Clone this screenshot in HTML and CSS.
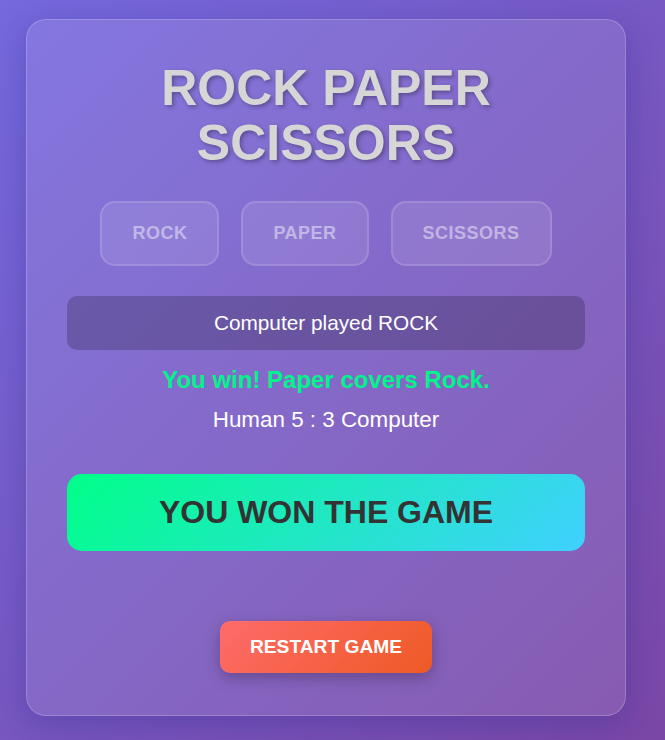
FILE: index.html
```html
<!DOCTYPE html>
<html lang="en">
<head>
<meta charset="utf-8">
<title>Rock Paper Scissors</title>
<link rel="stylesheet" href="styles.css">
</head>
<body>
<div class="page">
  <main class="card">
    <h1 class="title">ROCK PAPER SCISSORS</h1>
    <div class="choices">
      <button class="choice" disabled>ROCK</button>
      <button class="choice" disabled>PAPER</button>
      <button class="choice" disabled>SCISSORS</button>
    </div>
    <div class="computer">Computer played ROCK</div>
    <p class="result">You win! Paper covers Rock.</p>
    <p class="score">Human 5 : 3 Computer</p>
    <div class="banner">YOU WON THE GAME</div>
    <div class="restart-row">
      <button class="restart">RESTART GAME</button>
    </div>
  </main>
</div>
</body>
</html>
```

FILE: styles.css
```css
* { box-sizing: border-box; }
html, body { margin: 0; padding: 0; }
body {
  font-family: "Liberation Sans", Arial, sans-serif;
  background: linear-gradient(135deg, #7569de 0%, #7a47a6 100%);
  min-height: 740px;
  color: #fff;
}
.page {
  display: flex;
  justify-content: center;
  padding: 19px 39px 0 26px;
}
.card {
  width: 600px;
  height: 697px;
  padding: 40px;
  background: rgba(255, 255, 255, 0.1);
  border: 1px solid rgba(255, 255, 255, 0.2);
  border-radius: 20px;
  box-shadow: 0 8px 32px rgba(31, 38, 135, 0.3);
  display: flex;
  flex-direction: column;
  align-items: stretch;
}
.title {
  margin: 1px 0 0;
  text-align: center;
  font-size: 50px;
  line-height: 55px;
  font-weight: 700;
  color: #d6d6d6;
  text-shadow: 2px 2px 4px rgba(0, 0, 0, 0.3);
}
.choices {
  display: flex;
  justify-content: center;
  gap: 22px;
  margin-top: 30px;
}
.choice {
  font-family: inherit;
  font-size: 18px;
  font-weight: 700;
  letter-spacing: 0.5px;
  padding: 20px 30px;
  border: 2px solid rgba(255, 255, 255, 0.3);
  border-radius: 15px;
  background: rgba(255, 255, 255, 0.2);
  color: #fff;
  opacity: 0.5;
}
.computer {
  margin-top: 30px;
  padding: 15px;
  background: rgba(0, 0, 0, 0.2);
  border-radius: 10px;
  text-align: center;
  font-size: 20.8px;
}
.result {
  margin: 16px 0 0;
  text-align: center;
  font-size: 24px;
  font-weight: 700;
  color: #00f58a;
}
.score {
  margin: 13px 0 0;
  text-align: center;
  font-size: 22.4px;
}
.banner {
  margin-top: 41px;
  padding: 20px;
  border-radius: 15px;
  background: linear-gradient(135deg, #00ff88 0%, #40d0ff 100%);
  color: #333;
  text-align: center;
  font-size: 32px;
  font-weight: 700;
}
.restart-row {
  display: flex;
  justify-content: center;
  margin-top: 70px;
}
.restart {
  font-family: inherit;
  font-size: 19.2px;
  font-weight: 700;
  padding: 15px 30px;
  border: none;
  border-radius: 10px;
  color: #fff;
  background: linear-gradient(135deg, #ff6b6b 0%, #ee5a24 100%);
  box-shadow: 0 5px 15px rgba(0, 0, 0, 0.25);
}
```
